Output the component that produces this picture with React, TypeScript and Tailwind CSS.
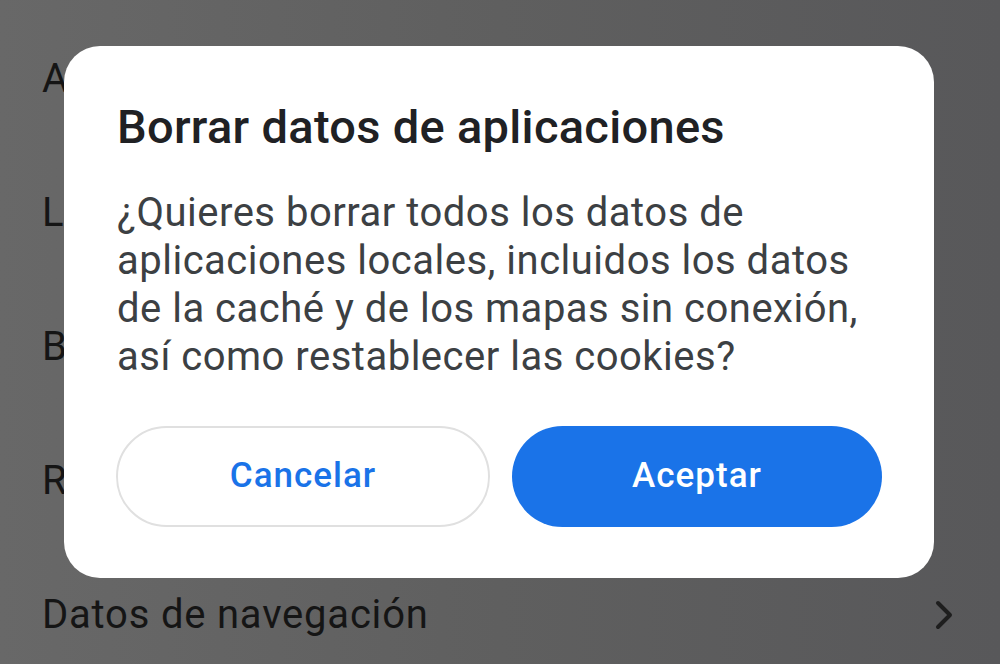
import React from 'react';

const rows = ['Autocompletar', 'Limpiar historial', 'Borrar cookies', 'Restablecer permisos'];

const font = { fontFamily: 'Roboto, "Noto Sans", sans-serif' };

export default function App() {
  return (
    <div
      className="relative w-[1000px] h-[664px] overflow-hidden bg-gradient-to-r from-[#686868] via-[#5f5f5f] to-[#58585a]"
      style={font}
    >
      {/* Settings list behind the scrim */}
      <div className="flex flex-col pt-[12px]">
        {rows.map((r) => (
          <div key={r} className="h-[134px] flex items-center pl-[42px] text-[40px] leading-[48px] text-[#151515]">
            {r}
          </div>
        ))}
        <div className="h-[134px] flex items-center justify-between pl-[42px] pr-[47px] text-[40px] leading-[48px] text-[#151515]">
          <span className="tracking-[0.8px]">Datos de navegación</span>
          <svg width="18" height="30" viewBox="0 0 18 30" fill="none">
            <path d="M3 3 L15 15 L3 27" stroke="#1e1e1e" strokeWidth="4" strokeLinecap="round" strokeLinejoin="round" />
          </svg>
        </div>
      </div>

      {/* Dialog */}
      <div className="absolute left-[64px] top-[46px] w-[870px] h-[532px] rounded-[36px] bg-white flex flex-col px-[52px] pt-[54px]">
        <h2 className="pl-[1px] text-[47px] leading-[54px] font-medium tracking-[0.3px] text-[#202124]">
          Borrar datos de aplicaciones
        </h2>
        <p className="mt-[35px] pl-[1px] text-[40px] leading-[48px] tracking-[0.5px] text-[#3c4043]">
          ¿Quieres borrar todos los datos de
          <br />
          aplicaciones locales, incluidos los datos
          <br />
          de la caché y de los mapas sin conexión,
          <br />
          así como restablecer las cookies?
        </p>
        <div className="mt-[45px] flex gap-[22px]">
          <button className="flex-1 h-[101px] rounded-full border-2 border-[#e0e0e0] bg-white text-[35px] font-medium tracking-[1px] text-[#1a73e8]">
            Cancelar
          </button>
          <button className="flex-1 h-[101px] rounded-full bg-[#1a73e8] text-[35px] font-medium tracking-[1px] text-white">
            Aceptar
          </button>
        </div>
      </div>
    </div>
  );
}
